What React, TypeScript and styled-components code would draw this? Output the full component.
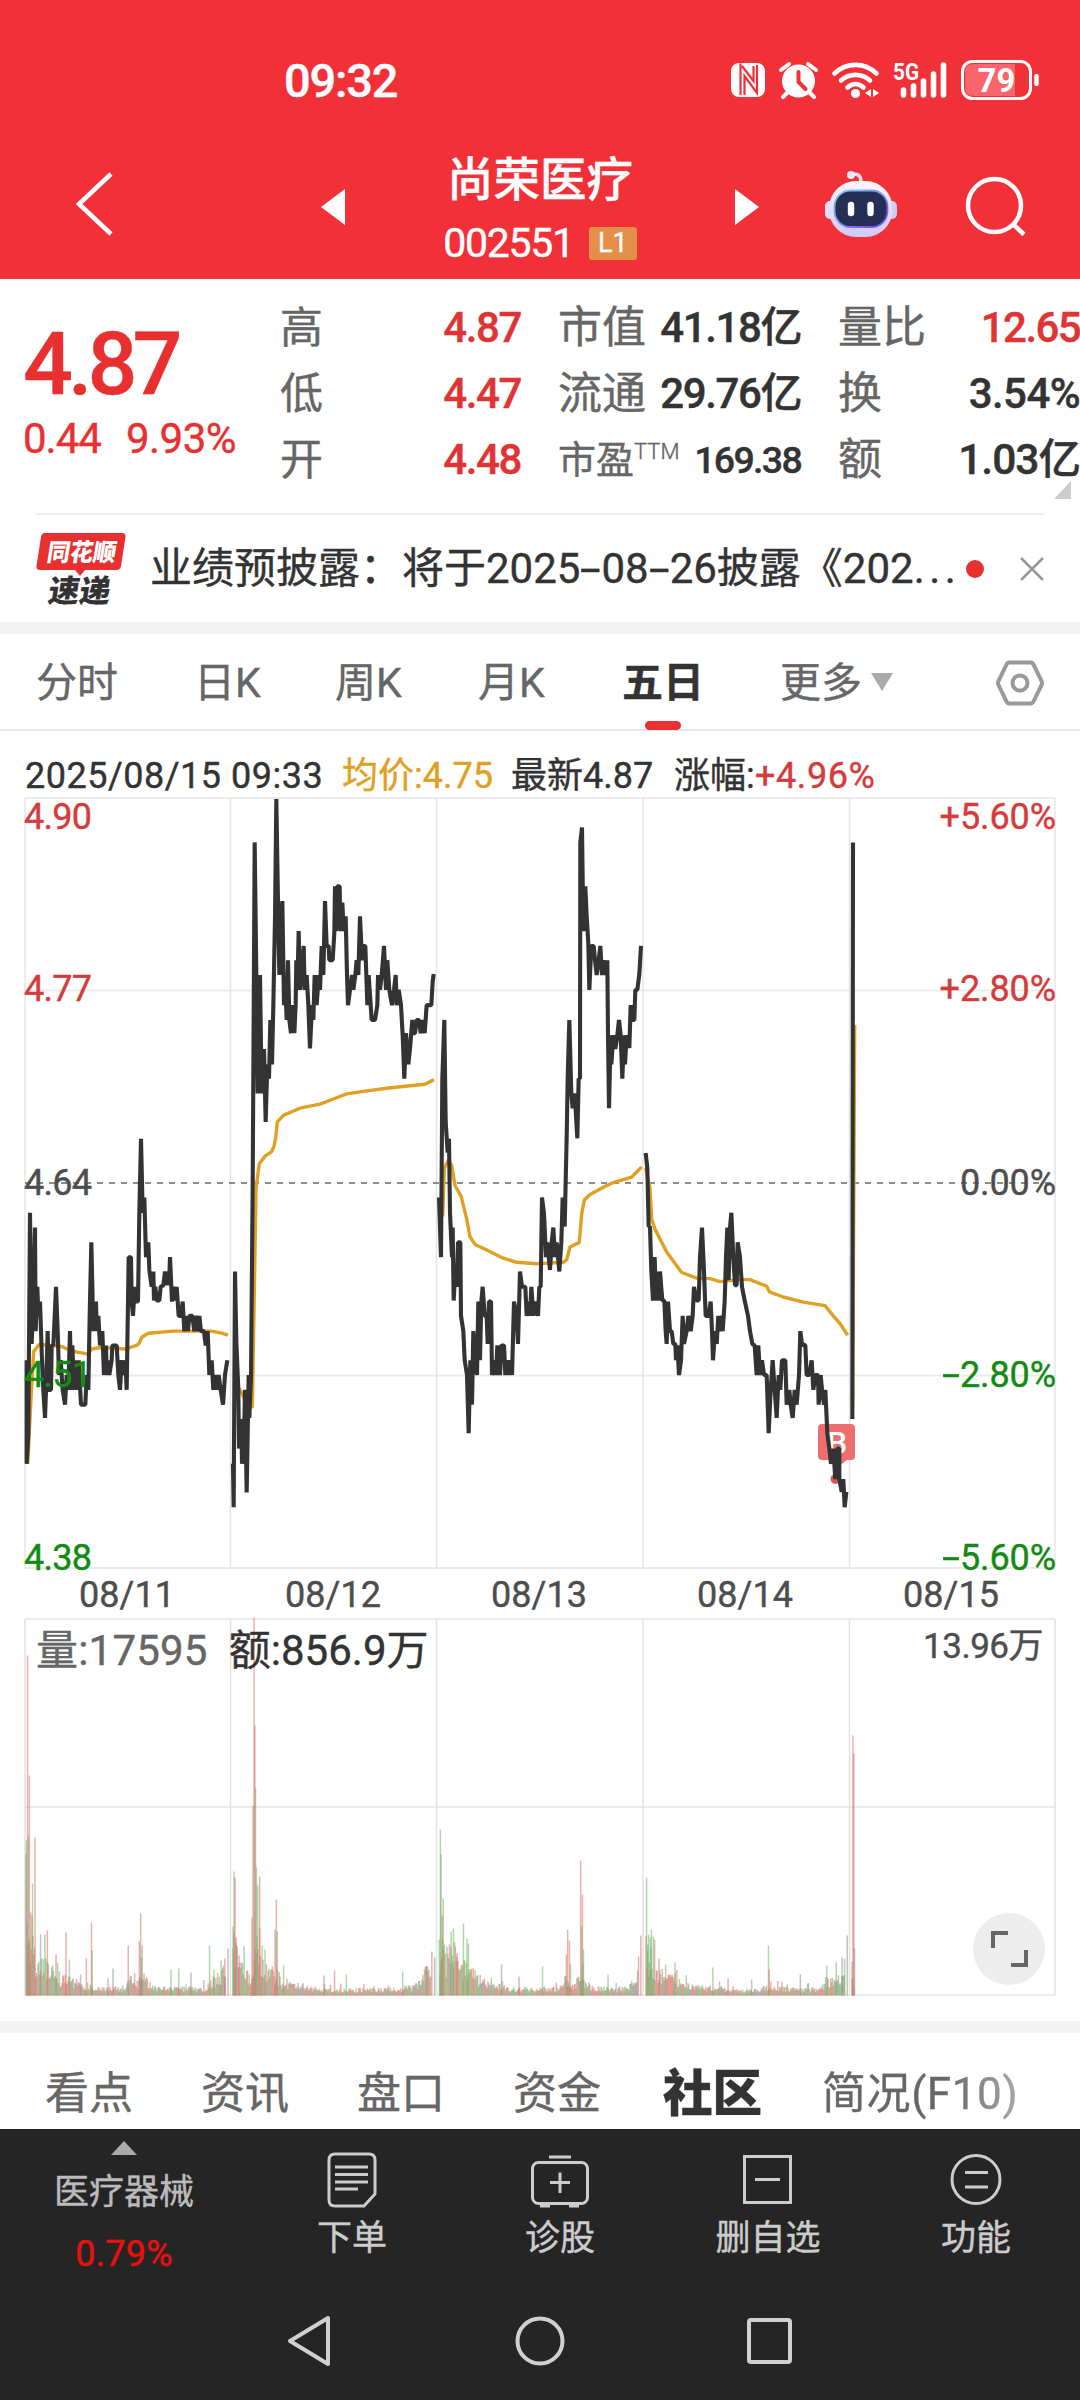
import React from "react";
import styled, { createGlobalStyle, css } from "styled-components";

const RED = "#e93030";
const INK = "#333333";
const GREY = "#666666";
const GREEN = "#138a13";
const FONT = `Roboto, "Noto Sans CJK SC", sans-serif`;

const GlobalStyle = createGlobalStyle`
  html, body { margin: 0; padding: 0; background: #ffffff; }
  * { box-sizing: border-box; }
  svg { display: block; overflow: visible; }
`;

const Screen = styled.div`
  width: 1080px;
  height: 2400px;
  overflow: hidden;
  display: flex;
  flex-direction: column;
  background: #ffffff;
  color: ${INK};
  font-family: ${FONT};
  white-space: nowrap;
  -webkit-text-stroke: 0.4px;
`;

interface TextProps {
  $size: number;
  $color?: string;
  $weight?: number;
  $track?: number;
}

const Text = styled.span<TextProps>`
  font-size: ${(p) => p.$size}px;
  font-weight: ${(p) => p.$weight ?? 400};
  letter-spacing: ${(p) => p.$track ?? 0}px;
  color: ${(p) => p.$color ?? "inherit"};
`;

const Dash = styled.span<{ $room: number }>`
  display: inline-block;
  width: ${(p) => p.$room}px;
  text-align: center;
  letter-spacing: 0;
  transform: scaleX(1.75);
`;

/* ---------- header ---------- */

const Header = styled.header`
  flex: none;
  height: 279px;
  background: #f23038;
  color: #ffffff;
`;

const StatusBar = styled.div`
  height: 160px;
  padding: 0 40px 0 284px;
  display: flex;
  align-items: center;
  justify-content: space-between;
`;

const TitleBar = styled.div`
  height: 119px;
  display: grid;
  grid-template-columns: 321px 24px 390px 24px 66px 72px 69px 60px;
  align-items: start;
`;

const Slot = styled.div<{ $top: number; $left?: number }>`
  padding-top: ${(p) => p.$top}px;
  padding-left: ${(p) => p.$left ?? 0}px;
`;

const StockTitle = styled.div`
  display: flex;
  flex-direction: column;
  align-items: center;
`;

const StockName = styled.div`
  height: 50px;
  margin-top: -5px;
  line-height: 50px;
  font-size: 46.5px;
  font-weight: 500;
`;

const StockCode = styled.div`
  height: 64px;
  margin-top: 6px;
  display: flex;
  align-items: center;
  gap: 15px;
`;

const LevelBadge = styled.span`
  width: 48px;
  height: 33px;
  border-radius: 3px;
  background: #e38e49;
  font-size: 27px;
  line-height: 33px;
  text-align: center;
`;

/* ---------- quote ---------- */

const Quote = styled.section`
  flex: none;
  height: 234px;
  padding: 16px 0 0 25px;
  display: grid;
  grid-template-columns: 255px 241px 37px 243px 37px 242px;
`;

const PriceBlock = styled.div`
  padding-top: 24px;
  margin-left: -2px;
  color: ${RED};
`;

const Price = styled.div`
  height: 90px;
  line-height: 90px;
  font-size: 88px;
  font-weight: 500;
  letter-spacing: -5px;
`;

const Change = styled.div`
  height: 60px;
  line-height: 60px;
  display: flex;
  gap: 25px;
`;

const Stats = styled.div<{ $col: number }>`
  grid-column: ${(p) => p.$col};
  position: relative;
`;

const Stat = styled.div`
  height: 66px;
  line-height: 66px;
  display: flex;
  justify-content: space-between;
  color: ${GREY};
`;

const Ttm = styled.sup`
  font-size: 22px;
  line-height: 0;
  vertical-align: 14px;
  font-weight: 300;
`;

const Corner = styled.i`
  position: absolute;
  right: 9px;
  top: 186px;
  width: 17px;
  height: 18px;
  background: #cccccc;
  clip-path: polygon(100% 0, 100% 100%, 0 100%);
`;

/* ---------- news ---------- */

const News = styled.section`
  flex: none;
  height: 109px;
  margin: 0 36px;
  border-top: 2px solid #ededed;
  display: flex;
  align-items: center;
`;

const Headline = styled.div`
  width: 816px;
  margin-left: 22px;
  font-size: 42px;
  line-height: 60px;
`;

const Dot = styled.i`
  width: 18px;
  height: 18px;
  border-radius: 50%;
  background: ${RED};
  margin-right: 36px;
`;

const Band = styled.div`
  flex: none;
  height: 12px;
  background: #f4f4f4;
`;

/* ---------- tabs ---------- */

const PeriodTabs = styled.nav`
  flex: none;
  height: 97px;
  border-bottom: 2px solid #e6e6e6;
  display: grid;
  grid-template-columns: 36px 158px 141px 143px 144px 158px 216px 49px;
  align-items: center;
  color: ${GREY};
  font-size: 41px;
`;

const PeriodTab = styled.div<{ $active?: boolean }>`
  height: 97px;
  line-height: 97px;
  padding-top: 2px;
  position: relative;
  display: flex;
  align-items: center;
  gap: 9px;
  ${(p) =>
    p.$active &&
    css`
      color: ${INK};
      font-weight: 700;
      &::after {
        content: "";
        position: absolute;
        left: 23px;
        bottom: 1px;
        width: 36px;
        height: 9px;
        border-radius: 5px;
        background: ${RED};
      }
    `}
`;

const Caret = styled.i`
  width: 22px;
  height: 18px;
  margin-top: -3px;
  background: #aaaaaa;
  clip-path: polygon(0 0, 100% 0, 50% 100%);
`;

/* ---------- charts ---------- */

const Legend = styled.div`
  flex: none;
  height: 67px;
  padding: 21px 0 0 25px;
  line-height: 48px;
  display: flex;
`;

const LegendItem = styled.span<{ $width: number; $color?: string; $track?: number }>`
  width: ${(p) => p.$width}px;
  color: ${(p) => p.$color ?? INK};
  font-size: 36px;
  letter-spacing: ${(p) => p.$track ?? 0}px;
`;

const ChartArea = styled.div<{ $height: number }>`
  flex: none;
  position: relative;
  height: ${(p) => p.$height}px;
`;

const AxisLabel = styled.span<{ $y: number; $side: "left" | "right"; $color: string }>`
  position: absolute;
  top: ${(p) => p.$y - 17}px;
  ${(p) => p.$side}: 24px;
  line-height: 34px;
  font-size: 36px;
  letter-spacing: ${(p) => (p.$side === "left" ? -0.7 : -0.1)}px;
  color: ${(p) => p.$color};
`;

const Dates = styled.div`
  flex: none;
  height: 50px;
  padding: 9px 25px 0 24px;
  display: grid;
  grid-template-columns: repeat(5, 206px);
  line-height: 36px;
  text-align: center;
  font-size: 36px;
  color: #4d4d4d;
`;

const VolumeInfo = styled.div`
  position: absolute;
  left: 36px;
  right: 37px;
  top: 11px;
  line-height: 44px;
  display: flex;
`;

const VolumeMax = styled.span`
  margin-left: auto;
  margin-top: -4px;
  font-size: 35px;
  letter-spacing: -0.5px;
  color: #4d4d4d;
`;

const Expand = styled.div`
  position: absolute;
  left: 973px;
  top: 295px;
  width: 72px;
  height: 72px;
  border-radius: 50%;
  background: #ededed;
`;

/* ---------- section tabs ---------- */

const SectionTabs = styled.nav`
  flex: none;
  height: 96px;
  padding: 26px 0 0 45px;
  display: grid;
  grid-template-columns: 156px 156px 156px 150px 159px 200px;
  line-height: 70px;
  font-size: 44px;
  color: ${GREY};
`;

const SectionTab = styled.div<{ $active?: boolean; $fade?: boolean }>`
  ${(p) =>
    p.$active &&
    css`
      color: ${INK};
      font-weight: 900;
      font-size: 49.5px;
    `}
  ${(p) =>
    p.$fade &&
    css`
      letter-spacing: 0.6px;
      color: transparent;
      background: linear-gradient(90deg, #666 60%, #aaa 100%);
      background-clip: text;
    `}
`;

/* ---------- bottom ---------- */

const Bottom = styled.footer`
  flex: none;
  height: 271px;
  background: #252525;
  color: #cccccc;
`;

const Actions = styled.div`
  height: 152px;
  display: grid;
  grid-template-columns: 248px repeat(4, 208px);
`;

const Sector = styled.div`
  padding-top: 12px;
  display: flex;
  flex-direction: column;
  align-items: center;
  font-size: 35px;
  line-height: 50px;
  color: #bbbbbb;
`;

const UpCaret = styled.i`
  width: 26px;
  height: 14px;
  margin-bottom: 13px;
  background: #aaaaaa;
  clip-path: polygon(50% 0, 100% 100%, 0 100%);
`;

const SectorChange = styled.div`
  margin-top: 11px;
  font-size: 36px;
  color: #ea1010;
  letter-spacing: 0.2px;
`;

const Action = styled.div`
  padding-top: 21px;
  display: flex;
  flex-direction: column;
  align-items: center;
  gap: 4px;
  font-size: 35px;
  line-height: 50px;
`;

const SystemNav = styled.div`
  height: 119px;
  padding: 33px 286px 0 286px;
  display: flex;
  justify-content: space-between;
`;

/* ---------- chart data ---------- */

type Series = string;

/* Plot grid: three units per pixel across, 1.96 per pixel down. */
const SX = 3;
const SY = 1.96;
const DAY3 = 1260;

const toPath = (s: Series, shift = 0) =>
  "M" +
  s
    .trim()
    .split(/\s+/)
    .map((pair) => {
      const [x, y] = pair.split(",").map(Number);
      return `${((x + shift) / SX).toFixed(2)} ${((y - 35) / SY).toFixed(2)}`;
    })
    .join("L");

const price: [Series, number][] = [
  [
    `80,1137 80,1340 85,1280 90,848 95,1105 101,993 105,877 107,1080 112,993 115,1050 120,1022 126,1137 130,1195 135,1250 138,1195 143,1080 147,1195 153,1195 155,1108 160,1108 162,1080 168,993 173,1080 177,1166 182,1137 188,1195 195,1224 200,1166 205,1195 210,1080 214,1195 217,1108 222,1195 228,1137 232,1195 236,1137 243,1224 256,1224 260,1166 265,1195 269,1050 274,906 280,1080 288,1022 290,1080 295,1050 300,1108 307,1080 312,1166 318,1108 320,1166 326,1137 328,1166 335,1137 337,1108 350,1108 355,1166 360,1195 365,1137 370,1166 376,1137 380,1195 386,935 393,935 395,1022 399,1050 404,993 408,1022 414,1022 418,848 423,703 428,848 433,818 438,935 445,906 448,960 455,993 460,963 462,1020 466,993 470,1020 478,1020 482,993 490,990 495,963 499,990 503,963 507,990 510,935 516,1022 522,993 526,1020 530,993 536,1050 543,1050 548,1022 553,1080 558,1050 564,1080 568,1050 577,1050 583,1080 590,1050 596,1080 598,1050 603,1080 612,1080 617,1108 623,1080 628,1166 635,1137 640,1195 646,1166 650,1195 656,1166 662,1195 669,1224 675,1166 682,1137`,
    0,
  ],
  [
    `699,1340 701,1425 705,963 709,1100 715,1195 717,1310 724,1252 726,1340 732,1290 735,1195 740,1396 746,1166 748,1250 753,1166 758,800 764,122 769,380 773,614 780,382 785,614 792,527 797,670 802,557 807,585 811,470 816,557 820,441 825,270 829,37 833,200 838,382 847,237 852,441 856,400 860,470 864,353 868,470 873,496 878,441 883,496 887,440 889,353 892,411 896,296 900,411 905,380 911,325 914,411 920,382 925,441 930,526 936,441 940,470 944,382 950,441 956,382 960,411 965,325 970,382 975,237 980,325 986,325 988,353 998,353 1003,300 1005,208 1008,296 1012,208 1019,208 1021,296 1027,240 1031,296 1037,267 1041,382 1044,441 1050,411 1056,382 1060,411 1066,382 1070,353 1075,382 1080,267 1086,353 1090,325 1096,325 1102,441 1106,382 1115,470 1125,470 1132,441 1134,382 1140,411 1145,382 1152,325 1158,411 1162,353 1168,411 1176,441 1182,411 1187,382 1190,441 1196,411 1203,441 1208,500 1213,585 1218,496 1225,557 1230,526 1237,470 1240,496 1245,496 1250,470 1257,470 1262,496 1268,470 1274,496 1280,441 1294,441 1298,395 1301,380`,
    0,
  ],
  [
    `57,818 63,935 67,585 73,470 77,670 83,730 87,703 90,848 96,935 98,877 101,1020 106,963 110,993 114,906 121,906 123,1050 130,1080 134,1137 141,1166 146,1280 151,1137 156,1224 160,1080 165,1137 171,1166 175,1022 180,1137 184,1022 188,993 194,1050 200,1050 203,1105 207,1022 213,1022 216,1166 224,1137 228,1166 232,1108 240,1166 244,1108 252,1108 256,1166 262,1137 266,1166 271,1137 276,1166 282,1022 290,1050 294,1105 300,963 306,993 316,993 320,1050 326,1022 330,1050 334,993 340,1050 345,1022 354,1050 358,993 362,993 366,818 372,850 378,935 382,906 390,960 395,906 400,877 405,935 410,906 418,963 424,906 428,818 434,875 440,700 443,585 448,470 454,614 458,643 464,614 472,702 476,585 480,585 481,122 486,93 490,296 496,208 500,267 505,320 508,411 514,325 521,325 525,353 530,382 536,353 541,325 546,382 552,353 556,382 562,353 564,500 567,643 572,500 574,557 580,500 586,527 592,500 597,470 602,500 607,585 612,500 615,557 620,500 628,525 632,441 637,470 643,470 646,411 652,411 658,380 663,325`,
    DAY3,
  ],
  [
    `677,731 682,760 686,875 690,875 694,963 699,1020 704,935 708,1020 714,963 718,1020 720,963 727,1020 733,1020 737,1080 740,1105 744,1022 750,1080 755,1080 760,1105 766,1105 768,1137 772,1108 777,1166 783,1137 788,1050 792,1105 800,1080 805,1050 812,1080 818,1050 822,993 830,1020 836,1020 840,935 846,877 852,963 857,1050 866,1050 872,1022 876,1080 879,1137 885,1080 890,1105 895,1050 900,1080 906,1050 908,1080 914,1022 918,935 922,877 926,980 930,877 934,848 940,935 945,990 950,990 953,906 960,935 966,993 974,1020 984,1050 990,1080 997,1105 1004,1108 1010,1166 1015,1108 1020,1166 1026,1137 1032,1166 1040,1166 1046,1280 1052,1195 1058,1137 1064,1195 1070,1250 1076,1166 1081,1195 1086,1137 1096,1137 1100,1224 1108,1195 1112,1224 1118,1250 1124,1195 1130,1224 1137,1166 1141,1080 1146,1105 1156,1108 1160,1166 1168,1166 1175,1137 1180,1195 1186,1166 1194,1166 1196,1224 1202,1166 1206,1195 1212,1224 1216,1195 1222,1280 1228,1310 1233,1340 1240,1310 1246,1370 1252,1310 1258,1310 1258,1370 1265,1395 1270,1370 1274,1425 1279,1395`,
    DAY3,
  ],
  [`1297,1252 1299,122`, DAY3],
];

const average: [Series, number][] = [
  [`83,1340 94,1200 101,1120 118,1106 150,1108 185,1110 215,1119 265,1125 275,1115 300,1112 375,1115 410,1108 418,1103 425,1092 445,1084 520,1080 635,1080 665,1084 684,1088`, 0],
  [`715,1190 728,1205 740,1222 757,1228 763,1000 768,800 778,752 795,737 815,728 822,718 827,700 832,670 850,657 900,643 960,635 1000,625 1040,615 1090,610 1160,604 1215,600 1275,596 1302,587`, 0],
  [`68,855 73,760 85,745 95,755 105,795 123,815 140,860 150,895 165,910 200,921 250,937 290,945 350,948 430,945 440,940 450,915 478,906 485,850 493,823 510,812 550,798 575,790 635,778 650,768 665,758`, DAY3],
  [`677,760 690,800 695,860 705,880 740,925 785,965 830,976 870,977 900,983 960,979 990,979 1040,992 1048,1003 1090,1013 1150,1023 1215,1030 1240,1050 1260,1065 1283,1088`, DAY3],
  [`1298,1230 1304,480`, DAY3],
];

const pricePaths = price.map(([s, d]) => toPath(s, d));
const averagePaths = average.map(([s, d]) => toPath(s, d));

type Tone = "r" | "g" | "n";
const tones: Record<Tone, string> = { r: "#e0706c", g: "#70b468", n: "#909090" };

/* Envelope of ordinary minutes: x, height. */
const envelopes: [number, number][][] = [
  [[26, 150], [30, 90], [36, 48], [48, 38], [60, 24], [78, 17], [86, 14], [95, 9], [126, 10], [129, 22], [138, 16], [143, 24], [152, 11], [170, 9], [205, 10], [214, 20], [226, 36]],
  [[233, 70], [238, 42], [248, 26], [252, 30], [258, 90], [262, 46], [268, 30], [274, 32], [282, 20], [292, 14], [320, 8], [400, 8], [418, 14], [424, 26], [431, 36]],
  [[440, 60], [446, 48], [454, 60], [460, 30], [468, 42], [476, 24], [490, 14], [520, 8], [558, 10], [565, 26], [572, 14], [583, 22], [592, 10], [615, 8], [630, 12], [637, 22]],
  [[646, 55], [651, 50], [658, 30], [672, 22], [684, 13], [720, 10], [740, 6], [765, 10], [800, 8], [818, 9], [828, 22], [834, 16], [845, 30]],
  [[852, 20], [854, 20]],
];

const spikes: [number, number, Tone][] = [
  [26.4, 155, "g"], [27.5, 340, "r"], [28.4, 160, "g"], [29.3, 220, "r"], [30.6, 83, "r"], [32.5, 112, "g"], [35, 158, "r"], [40.5, 61, "n"], [47.3, 65, "r"], [56, 41, "r"], [66, 63, "r"], [69.3, 36, "g"], [80.5, 21, "n"], [86.3, 37, "r"], [91.4, 73, "r"], [92.2, 45, "g"], [108, 17, "r"], [113, 27, "n"], [128.2, 50, "r"], [139.3, 54, "r"], [140.6, 82, "r"], [142.2, 50, "g"], [141.3, 38, "n"], [171, 26, "g"], [178.7, 27, "g"], [191, 23, "n"], [209.5, 50, "g"], [214, 26, "g"], [221, 35, "g"], [224.8, 37, "r"], [228, 47, "n"],
  [233, 69, "g"], [234, 124, "g"], [235, 118, "r"], [236, 58, "r"], [239, 40, "r"], [252, 78, "r"], [253, 190, "r"], [254, 378, "r"], [254.8, 270, "r"], [255.5, 208, "g"], [256.3, 128, "g"], [257.6, 110, "g"], [259.6, 119, "r"], [262, 50, "g"], [265, 46, "g"], [275, 66, "r"], [276.3, 96, "r"], [277.2, 64, "g"], [283.6, 30, "g"], [324, 20, "r"], [334.5, 25, "r"], [346.3, 21, "g"], [402.6, 24, "g"], [427, 30, "r"], [431.8, 44, "r"], [434.6, 38, "n"],
  [439.3, 56, "g"], [440.3, 166, "g"], [441, 141, "g"], [442.2, 80, "r"], [443.2, 97, "g"], [451, 64, "g"], [453.4, 67, "g"], [457, 42, "r"], [463.4, 72, "g"], [467, 57, "g"], [468.4, 52, "g"], [501.5, 31, "n"], [519, 19, "r"], [542.5, 29, "g"], [566.3, 41, "r"], [567.6, 66, "r"], [569.4, 55, "r"], [570.4, 31, "g"], [580.6, 135, "r"], [581.6, 69, "g"], [582.4, 101, "r"], [583.4, 46, "g"], [608, 21, "g"], [637.5, 25, "n"], [638.5, 39, "r"], [640.8, 60, "r"],
  [646.5, 118, "g"], [647.5, 51, "g"], [648.5, 61, "g"], [650.3, 58, "g"], [651.4, 66, "g"], [653.4, 59, "g"], [659, 37, "r"], [665.6, 31, "g"], [675, 33, "g"], [712.8, 28, "g"], [728, 17, "r"], [751.6, 16, "g"], [768.4, 50, "g"], [769.2, 26, "r"], [800.3, 21, "r"], [826.7, 30, "g"], [836.2, 33, "g"], [842, 38, "n"], [844.5, 37, "g"], [847.2, 60, "n"],
  [852, 34, "r"], [852.9, 260, "r"], [853.7, 242, "r"], [854.5, 47, "n"],
];

const buildBars = () => {
  let seed = 20250815;
  const rand = () => {
    seed = (seed * 1103515245 + 12345) % 2147483648;
    return seed / 2147483648;
  };
  const bars: [number, number, Tone][] = [];
  envelopes.forEach((env) => {
    const end = env[env.length - 1][0];
    for (let x = env[0][0]; x <= end; x += 0.855) {
      const k = Math.max(1, env.findIndex((p) => p[0] >= x));
      const [x0, h0] = env[k - 1];
      const [x1, h1] = env[k];
      const h = h0 + ((h1 - h0) * (x - x0)) / (x1 - x0);
      const lift = rand() > 0.93 ? 1.6 : 1;
      const pick = rand();
      bars.push([x, Math.max(2, h * (0.35 + rand() * 0.65) * lift), pick < 0.42 ? "r" : pick < 0.8 ? "g" : "n"]);
    }
  });
  return bars.concat(spikes);
};

const bars = buildBars();
const dayLines = [25, 230.5, 436.5, 643, 849.5, 1055];

const PriceChart = () => (
  <svg width="1080" height="770" fill="none">
    <g stroke="#ebebeb" strokeWidth="2">
      {[0, 192.5, 577.5, 770].map((y) => (
        <path key={y} d={`M25 ${y}H1055`} />
      ))}
      {dayLines.map((x) => (
        <path key={x} d={`M${x} 0V770`} stroke="#e4e4e4" strokeWidth="1.5" />
      ))}
    </g>
    <path d="M25 385H1055" stroke="#8c8c8c" strokeWidth="2" strokeDasharray="6 6" />
    <g>
      <rect x="818" y="626" width="37" height="36" rx="4" fill="#ee6d6f" />
      <path d="M836 661h12l-6 5z" fill="#ee6d6f" />
      <circle cx="835.5" cy="681" r="5" fill="#dd5558" />
      <text x="837" y="656" textAnchor="middle" fontFamily="Roboto" fontSize="32" fontWeight="500" fill="#ffffff">
        B
      </text>
    </g>
    <g stroke="#dfa024" strokeWidth="3.4" strokeLinejoin="round">
      {averagePaths.map((d) => (
        <path key={d} d={d} />
      ))}
    </g>
    <g stroke="#333333" strokeWidth="4.1" strokeLinejoin="bevel">
      {pricePaths.map((d) => (
        <path key={d} d={d} />
      ))}
    </g>
  </svg>
);

const VolumeChart = () => (
  <svg width="1080" height="378" fill="none">
    <g stroke="#ebebeb" strokeWidth="2">
      {[1, 189, 377].map((y) => (
        <path key={y} d={`M25 ${y}H1055`} />
      ))}
      {dayLines.map((x) => (
        <path key={x} d={`M${x} 1V377`} stroke="#e2e2e2" strokeWidth="1.5" />
      ))}
    </g>
    {bars.map(([x, h, tone], i) => (
      <rect key={i} x={x - 0.7} y={377.5 - h} width="1.5" height={h} fill={tones[tone]} opacity="0.55" />
    ))}
  </svg>
);

/* ---------- icons ---------- */

const StatusIcons = () => (
  <svg width="312" height="44" viewBox="728 58 312 44" fill="none">
    <rect x="731" y="63" width="34" height="34" rx="8" fill="#fff" />
    <path d="M740.500 63.500V95M742 66L753.500 81V66M744.500 95V76L757 93V65" stroke="#f23038" strokeWidth="2.200" />
    <circle cx="798.500" cy="81" r="16.500" fill="#fff" />
    <path d="M781 70l8-6M816 70l-8-6M787 93l-4 4M810 93l4 4" stroke="#fff" strokeWidth="4" strokeLinecap="round" />
    <path d="M798.500 72v10l7 7" stroke="#f23038" strokeWidth="4" strokeLinecap="round" />
    <g stroke="#fff" strokeWidth="4.600" strokeLinecap="round">
      <path d="M834.500 73.500c12-11.500 30-11.500 42 0" />
      <path d="M841 80.500c8.500-7.500 20.500-7.500 29 0" />
      <path d="M847.500 87.500c5-4.500 11-4.500 16 0" />
    </g>
    <circle cx="855.500" cy="93.500" r="4.500" fill="#fff" />
    <path d="M871 89v8l-6-4zM873 89v8l6-4z" fill="#fff" />
    <text x="893" y="80" fontFamily="Roboto" fontSize="24" fontWeight="700" fill="#fff" textLength="26" lengthAdjust="spacingAndGlyphs">
      5G
    </text>
    <g stroke="#fff" strokeWidth="5.600" strokeLinecap="round">
      <path d="M903.500 90v5M913.500 86v9M923.500 81v14M933.500 74v21M943.500 65v30" />
    </g>
    <rect x="962.500" y="61.500" width="68" height="37" rx="10" fill="#f23038" stroke="#fff" strokeWidth="3" />
    <path d="M973 64h42v32h-42q-8 0-8-8v-16q0-8 8-8z" fill="#f8656a" />
    <path d="M1036.500 76v8" stroke="#fff" strokeWidth="4.500" strokeLinecap="round" />
    <text x="996.500" y="91.500" textAnchor="middle" fontFamily="Roboto" fontSize="33" fontWeight="700" fill="#fff">
      79
    </text>
  </svg>
);

const Robot = () => (
  <svg width="72" height="67" viewBox="825 171 72 67" fill="none">
    <defs>
      <linearGradient id="shell" x1="0" y1="0" x2="0" y2="1">
        <stop offset="0" stopColor="#fff4fb" />
        <stop offset="1" stopColor="#cfc9f8" />
      </linearGradient>
      <linearGradient id="rim" x1="0" y1="0" x2="1" y2="1">
        <stop offset="0" stopColor="#7fd4ee" />
        <stop offset="1" stopColor="#7a3ff0" />
      </linearGradient>
    </defs>
    <path d="M851 175q10-3 10 7" stroke="#f7dcea" strokeWidth="3.500" />
    <circle cx="851" cy="175" r="4" fill="#f8e4f2" />
    <rect x="825" y="201" width="12" height="18" rx="5" fill="#e3dcf7" />
    <rect x="885" y="201" width="12" height="18" rx="5" fill="#d5ccf6" />
    <rect x="829" y="181" width="63.500" height="56" rx="27" fill="url(#shell)" />
    <rect x="834.500" y="190.500" width="53" height="36.500" rx="16" fill="#252f55" stroke="url(#rim)" strokeWidth="1.800" />
    <path d="M851 205v8M870.500 205v8" stroke="#fff" strokeWidth="6.400" strokeLinecap="round" />
  </svg>
);

const Logo = () => (
  <svg width="92" height="76" viewBox="36 530 92 76">
    <path d="M45 532H122q4 0 3.500 4L121 565q-.6 4-4.500 4H85l-5 6-5-6H40q-4 0-3.500-4L41 536q.5-4 4-4z" fill={RED} />
    <g fontFamily='"Noto Sans CJK SC"' fontWeight="900">
      <text transform="translate(46 560) skewX(-9)" fontSize="24.500" fill="#fff" textLength="69" lengthAdjust="spacingAndGlyphs">
        同花顺
      </text>
      <text transform="translate(47 601) skewX(-9)" fontSize="31" fill={INK} textLength="62" lengthAdjust="spacingAndGlyphs">
        速递
      </text>
    </g>
  </svg>
);

const leftLabels: [string, number, string][] = [
  ["4.90", 19, "#d63b3b"],
  ["4.77", 191, "#d63b3b"],
  ["4.64", 385, "#4d4d4d"],
  ["4.51", 577, GREEN],
  ["4.38", 760, GREEN],
];
const rightLabels: [string, string, number, string][] = [
  ["+", "5.60%", 19, "#d63b3b"],
  ["+", "2.80%", 191, "#d63b3b"],
  ["", "0.00%", 385, "#4d4d4d"],
  ["-", "2.80%", 577, GREEN],
  ["-", "5.60%", 760, GREEN],
];

export default function App() {
  return (
    <Screen>
      <GlobalStyle />
      <Header>
        <StatusBar>
          <Text $size={47} $weight={500} $track={-1.2}>09:32</Text>
          <StatusIcons />
        </StatusBar>
        <TitleBar>
          <Slot $top={12} $left={76}>
            <svg width="38" height="64" fill="none">
              <path d="M35 2L3 32L35 62" stroke="#fff" strokeWidth="4.500" />
            </svg>
          </Slot>
          <Slot $top={29}>
            <svg width="24" height="36"><path d="M24 0V36L0 18z" fill="#fff" /></svg>
          </Slot>
          <StockTitle>
            <StockName>尚荣医疗</StockName>
            <StockCode>
              <Text $size={41} $track={-1.3}>002551</Text>
              <LevelBadge>L1</LevelBadge>
            </StockCode>
          </StockTitle>
          <Slot $top={29}>
            <svg width="24" height="36"><path d="M0 0V36L24 18z" fill="#fff" /></svg>
          </Slot>
          <span />
          <Slot $top={11}><Robot /></Slot>
          <span />
          <Slot $top={17}>
            <svg width="60" height="60" fill="none" stroke="#fff" strokeWidth="4.500">
              <circle cx="28.500" cy="28.500" r="26.500" />
              <path d="M46.500 46.500L58 57.500" />
            </svg>
          </Slot>
        </TitleBar>
      </Header>

      <Quote>
        <PriceBlock>
          <Price>4.87</Price>
          <Change>
            <Text $size={42} $track={-1}>0.44</Text>
            <Text $size={42} $track={-0.5}>9.93%</Text>
          </Change>
        </PriceBlock>
        <Stats $col={2}>
          {[["高", "4.87"], ["低", "4.47"], ["开", "4.48"]].map(([k, v]) => (
            <Stat key={k}>
              <Text $size={43}>{k}</Text>
              <Text $size={42} $weight={500} $track={-1.4} $color="#de3434">{v}</Text>
            </Stat>
          ))}
        </Stats>
        <Stats $col={4}>
          <Stat>
            <Text $size={44}>市值</Text>
            <Text $size={42} $weight={500} $track={-1.4} $color={INK}>41.18亿</Text>
          </Stat>
          <Stat>
            <Text $size={44}>流通</Text>
            <Text $size={42} $weight={500} $track={-1.4} $color={INK}>29.76亿</Text>
          </Stat>
          <Stat>
            <Text $size={38}>市盈<Ttm>TTM</Ttm></Text>
            <Text $size={37.5} $weight={500} $track={-1.7} $color={INK}>169.38</Text>
          </Stat>
        </Stats>
        <Stats $col={6}>
          <Stat>
            <Text $size={44}>量比</Text>
            <Text $size={42} $weight={500} $track={-1.6} $color="#de3434">12.65</Text>
          </Stat>
          <Stat>
            <Text $size={44}>换</Text>
            <Text $size={42} $weight={500} $track={-0.6} $color={INK}>3.54%</Text>
          </Stat>
          <Stat>
            <Text $size={44}>额</Text>
            <Text $size={42.5} $weight={500} $track={-1} $color={INK}>1.03亿</Text>
          </Stat>
          <Corner />
        </Stats>
      </Quote>

      <News>
        <Logo />
        <Headline>
          业绩预披露：将于2025<Dash $room={21}>-</Dash>08<Dash $room={21}>-</Dash>26披露《202
          <Text $size={42} $track={4.5}>...</Text>
        </Headline>
        <Dot />
        <svg width="24" height="24" stroke="#999" strokeWidth="2.500"><path d="M1 1L23 23M23 1L1 23" /></svg>
      </News>
      <Band />

      <PeriodTabs>
        <span />
        <PeriodTab>分时</PeriodTab>
        <PeriodTab>日K</PeriodTab>
        <PeriodTab>周K</PeriodTab>
        <PeriodTab>月K</PeriodTab>
        <PeriodTab $active>五日</PeriodTab>
        <PeriodTab>更多<Caret /></PeriodTab>
        <svg width="48" height="46" fill="none" stroke="#999" strokeWidth="4">
          <path d="M13.500 2.500h21q2 0 3 2l8 16.500q1 2 0 4l-8 16.500q-1 2-3 2h-21q-2 0-3-2l-8-16.500q-1-2 0-4l8-16.500q1-2 3-2z" />
          <circle cx="24" cy="23" r="7.500" />
        </svg>
      </PeriodTabs>

      <Legend>
        <LegendItem $width={317} $track={0.5}>2025/08/15 09:33</LegendItem>
        <LegendItem $width={169} $color="#dfa024">均价:4.75</LegendItem>
        <LegendItem $width={163}>最新4.87</LegendItem>
        <LegendItem $width={81}>涨幅:</LegendItem>
        <LegendItem $width={130} $color="#d63b3b" $track={0.6}>+4.96%</LegendItem>
      </Legend>
      <ChartArea $height={770}>
        <PriceChart />
        {leftLabels.map(([t, y, c]) => (
          <AxisLabel key={t} $y={y} $side="left" $color={c}>{t}</AxisLabel>
        ))}
        {rightLabels.map(([s, t, y, c]) => (
          <AxisLabel key={s + t} $y={y} $side="right" $color={c}>
            {s === "-" ? <Dash $room={18}>-</Dash> : s}{t}
          </AxisLabel>
        ))}
      </ChartArea>
      <Dates>
        {["08/11", "08/12", "08/13", "08/14", "08/15"].map((d) => <span key={d}>{d}</span>)}
      </Dates>
      <ChartArea $height={403}>
        <VolumeChart />
        <VolumeInfo>
          <Text $size={42} $color={GREY} $track={0.2}>量:17595&nbsp;&nbsp;</Text>
          <Text $size={42} $color={INK}>额:856.9万</Text>
          <VolumeMax>13.96万</VolumeMax>
        </VolumeInfo>
        <Expand>
          <svg width="72" height="72" fill="none" stroke="#666" strokeWidth="4">
            <path d="M20 35V20H35M53 37V52H38" />
          </svg>
        </Expand>
      </ChartArea>
      <Band />

      <SectionTabs>
        <SectionTab>看点</SectionTab>
        <SectionTab>资讯</SectionTab>
        <SectionTab>盘口</SectionTab>
        <SectionTab>资金</SectionTab>
        <SectionTab $active>社区</SectionTab>
        <SectionTab $fade>简况(F10)</SectionTab>
      </SectionTabs>

      <Bottom>
        <Actions>
          <Sector>
            <UpCaret />
            医疗器械
            <SectorChange>0.79%</SectorChange>
          </Sector>
          <Action>
            <svg width="50" height="60" fill="none" stroke="#ccc" strokeWidth="3">
              <path d="M8 4H42q6 0 6 6V44L37 56H8q-6 0-6-6V10q0-6 6-6z" />
              <path d="M8 17H41M8 24.500H41M8 32H41M8 39H31" />
            </svg>
            下单
          </Action>
          <Action>
            <svg width="58" height="60" fill="none" stroke="#ccc" strokeWidth="3">
              <rect x="1.500" y="12.500" width="55" height="41" rx="6" />
              <path d="M18 7H40M29 22.500V43M19 32.500H39M9 56H19M38 56H48" />
            </svg>
            诊股
          </Action>
          <Action>
            <svg width="50" height="60" fill="none" stroke="#ccc" strokeWidth="3">
              <rect x="1.500" y="6.500" width="46" height="46" />
              <path d="M12 29.500H37" />
            </svg>
            删自选
          </Action>
          <Action>
            <svg width="52" height="60" fill="none" stroke="#ccc" strokeWidth="3">
              <circle cx="26" cy="29.500" r="24" />
              <path d="M15 22.500H38M15 37H38" />
            </svg>
            功能
          </Action>
        </Actions>
        <SystemNav>
          <svg width="46" height="54" fill="none" stroke="#d0d0d0" strokeWidth="4" strokeLinejoin="round">
            <path d="M42 4V50L4 27z" />
          </svg>
          <svg width="54" height="54" fill="none" stroke="#d0d0d0" strokeWidth="4">
            <circle cx="29" cy="27" r="22.500" />
          </svg>
          <svg width="50" height="54" fill="none" stroke="#d0d0d0" strokeWidth="4">
            <rect x="5" y="6" width="41" height="42" rx="2" />
          </svg>
        </SystemNav>
      </Bottom>
    </Screen>
  );
}
